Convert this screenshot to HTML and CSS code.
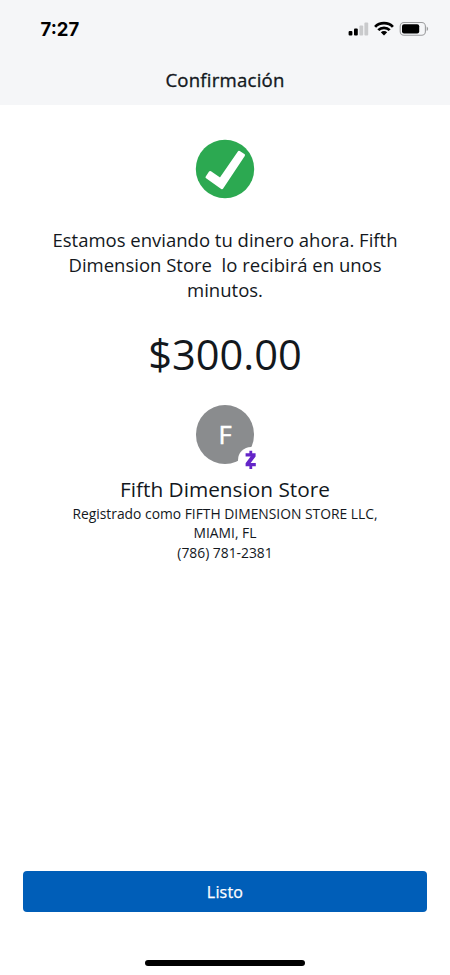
FILE: index.html
```html
<!DOCTYPE html>
<html lang="es">
<head>
<meta charset="utf-8">
<meta name="viewport" content="width=device-width, initial-scale=1">
<title>Confirmación</title>
<link rel="stylesheet" href="styles.css">
</head>
<body>
<header class="header">
  <div class="status">
    <span class="time">7:27</span>
    <svg class="indicators" width="82" height="18" viewBox="0 0 82 18" aria-hidden="true">
      <rect x="1.6" y="11" width="3.8" height="4.4" rx="1"/>
      <rect x="7" y="8.6" width="3.8" height="6.8" rx="1"/>
      <g fill="#c9cacc">
        <rect x="12.4" y="5.4" width="3.8" height="10" rx="1"/>
        <rect x="17.4" y="2.4" width="3.8" height="13" rx="1"/>
      </g>
      <g fill="none" stroke="#000" stroke-width="2.7">
        <path d="M28.1 6.9C32.6 1.9 41.4 1.9 45.9 6.9"/>
        <path d="M31.3 10.2C34.3 7 39.7 7 42.7 10.2"/>
      </g>
      <path d="M33.8 12.3C35.5 10.7 38.5 10.7 40.2 12.3L37 15.5Z"/>
      <rect x="53.2" y="2.5" width="25.2" height="12.7" rx="3.8" fill="none" stroke="#9b9c9e" stroke-width="1.1"/>
      <rect x="55" y="4.3" width="17.2" height="9.2" rx="2"/>
      <path d="M79.7 6.5C81.6 7.3 81.6 10.3 79.7 11.1Z" fill="#9b9c9e"/>
    </svg>
  </div>
  <h1 class="title">Confirmación</h1>
</header>
<main class="content">
  <svg class="check" width="60" height="60" viewBox="0 0 60 60" aria-hidden="true">
    <circle cx="30" cy="30" r="29.2" fill="#2ca951"/>
    <path d="M11.9 38.2L15.2 33.4L25.4 40.4L44 13.2L48.6 16.2L27 48.8Z" fill="#fff" stroke="#fff" stroke-width="2.8" stroke-linejoin="round"/>
  </svg>
  <p class="message">Estamos enviando tu dinero ahora. Fifth<br>Dimension Store&nbsp; lo recibirá en unos<br>minutos.</p>
  <p class="amount">$300.00</p>
  <div class="avatar">
    <span class="initial">F</span>
    <svg class="badge" width="28" height="28" viewBox="0 0 28 28" aria-hidden="true">
      <circle cx="14" cy="14" r="13" fill="#fff"/>
      <path d="M8.6 7.2H18.6V10.5L13.6 17H18.8V20.3H8.6V17.3L13.6 10.5H8.6Z" fill="#6425c8"/>
      <path d="M13.8 4.8V8M13.8 19V23" stroke="#6425c8" stroke-width="2.8"/>
    </svg>
  </div>
  <h2 class="name">Fifth Dimension Store</h2>
  <p class="details">Registrado como FIFTH DIMENSION STORE LLC,<br>MIAMI, FL<br>(786) 781-2381</p>
</main>
<footer class="footer">
  <button class="done" type="button">Listo</button>
  <div class="home"></div>
</footer>
</body>
</html>
```
FILE: styles.css
```css
* { box-sizing: border-box; margin: 0; padding: 0; }
body {
  display: flex;
  flex-direction: column;
  width: 450px;
  height: 975px;
  overflow: hidden;
  background: #fff;
  color: #13181d;
  font-family: "Open Sans", "Noto Sans", sans-serif;
}
.header { height: 105px; background: #f5f6f8; }
.status {
  display: flex;
  justify-content: space-between;
  padding: 20px 21px 0 40.5px;
  height: 66px;
}
.time {
  color: #000;
  font: 700 18.5px/18px Inter, sans-serif;
}
.title {
  font-size: 18.6px;
  font-weight: 500;
  letter-spacing: .22px;
  line-height: 28px;
  text-align: center;
  -webkit-text-stroke: .35px currentColor;
}
.content {
  display: flex;
  flex: 1;
  flex-direction: column;
  align-items: center;
  padding-top: 34px;
  text-align: center;
}
.message {
  margin-top: 28px;
  font-size: 18.5px;
  line-height: 25px;
  white-space: nowrap;
}
.amount {
  margin-top: 27px;
  font-size: 41.6px;
  line-height: 50px;
}
.avatar {
  position: relative;
  display: grid;
  place-items: center;
  width: 58.5px;
  height: 58.5px;
  margin-top: 26px;
  border-radius: 50%;
  background: #8a8c8e;
}
.initial {
  margin-top: -1px;
  color: #fff;
  font-size: 25.5px;
  font-weight: 500;
  line-height: 30px;
  -webkit-text-stroke: .5px currentColor;
}
.badge { position: absolute; left: 41px; top: 41px; }
.name {
  margin-top: 10.5px;
  font-size: 20.8px;
  font-weight: 400;
  line-height: 30px;
}
.details {
  font-size: 13.85px;
  line-height: 19.4px;
  white-space: nowrap;
}
.footer {
  display: flex;
  flex-direction: column;
  align-items: center;
  height: 104px;
}
.done {
  width: 404px;
  height: 41px;
  padding-top: 1px;
  border: 0;
  border-radius: 4px;
  background: #005eb8;
  color: #fff;
  font: 500 16px/40px "Open Sans", sans-serif;
  letter-spacing: .2px;
  -webkit-text-stroke: .25px currentColor;
}
.home {
  width: 160px;
  height: 6px;
  margin-top: 48px;
  border-radius: 3px;
  background: #000;
}
```
